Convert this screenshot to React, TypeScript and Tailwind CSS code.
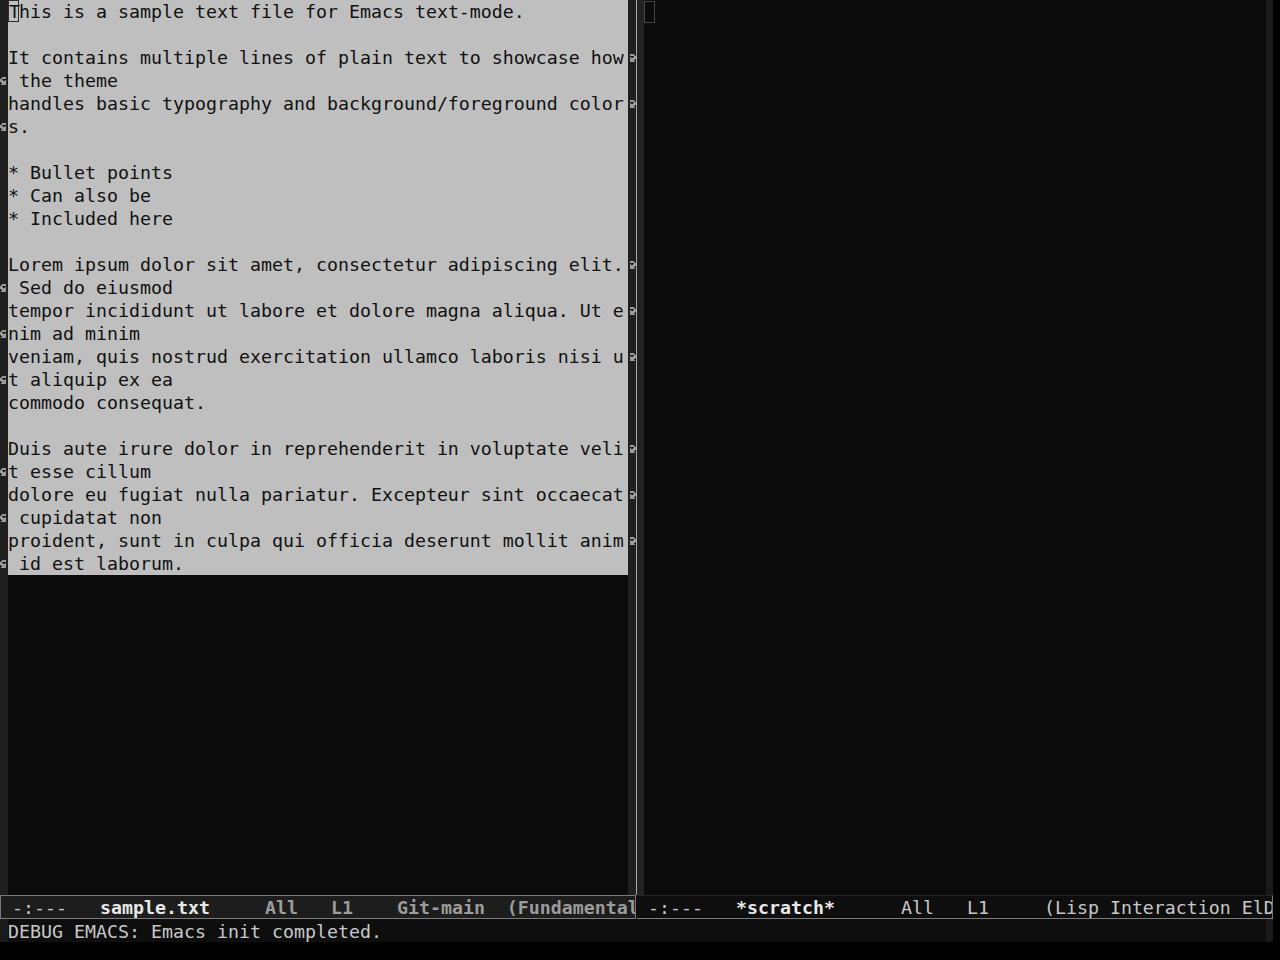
import type { ReactNode } from 'react'

const LEFT_ARROW = [0x3c, 0x7c, 0xc0, 0xe4, 0xfc, 0x7c, 0x3c, 0x7c]
const RIGHT_ARROW = [0x3c, 0x3e, 0x03, 0x27, 0x3f, 0x3e, 0x3c, 0x3e]

type Line = { text: string; r?: boolean; l?: boolean }

const lines: Line[] = [
  { text: 'This is a sample text file for Emacs text-mode.' },
  { text: '' },
  { text: 'It contains multiple lines of plain text to showcase how', r: true },
  { text: ' the theme', l: true },
  { text: 'handles basic typography and background/foreground color', r: true },
  { text: 's.', l: true },
  { text: '' },
  { text: '* Bullet points' },
  { text: '* Can also be' },
  { text: '* Included here' },
  { text: '' },
  { text: 'Lorem ipsum dolor sit amet, consectetur adipiscing elit.', r: true },
  { text: ' Sed do eiusmod', l: true },
  { text: 'tempor incididunt ut labore et dolore magna aliqua. Ut e', r: true },
  { text: 'nim ad minim', l: true },
  { text: 'veniam, quis nostrud exercitation ullamco laboris nisi u', r: true },
  { text: 't aliquip ex ea', l: true },
  { text: 'commodo consequat.' },
  { text: '' },
  { text: 'Duis aute irure dolor in reprehenderit in voluptate veli', r: true },
  { text: 't esse cillum', l: true },
  { text: 'dolore eu fugiat nulla pariatur. Excepteur sint occaecat', r: true },
  { text: ' cupidatat non', l: true },
  { text: 'proident, sunt in culpa qui officia deserunt mollit anim', r: true },
  { text: ' id est laborum.', l: true },
]

function FringeBitmap({ bits }: { bits: number[] }) {
  const rects: ReactNode[] = []
  bits.forEach((row, y) => {
    for (let x = 0; x < 8; x++) {
      if (row & (0x80 >> x)) rects.push(<rect key={`${x}-${y}`} x={x} y={y} width={1} height={1} />)
    }
  })
  return (
    <svg width="8" height="8" viewBox="0 0 8 8" fill="#9a9a9a" shapeRendering="crispEdges">
      {rects}
    </svg>
  )
}

const mono = { fontFamily: '"DejaVu Sans Mono", "Liberation Mono", monospace' }

function TextLine({ line, first }: { line: Line; first: boolean }) {
  return (
    <div className="flex h-[23px]">
      <div className="flex w-[8px] items-center bg-[#1f1f1f]">
        {line.l && <FringeBitmap bits={LEFT_ARROW} />}
      </div>
      <div className="w-[620px] whitespace-pre bg-[#bfbfbf] text-[#111111]">
        {first ? (
          <>
            <span className="inline-block h-[22px] w-[11px] border border-[#2e2e2e] align-top leading-[21px]">
              {line.text[0]}
            </span>
            {line.text.slice(1)}
          </>
        ) : (
          line.text
        )}
      </div>
      <div className="flex w-[8px] items-center bg-[#1f1f1f]">
        {line.r && <FringeBitmap bits={RIGHT_ARROW} />}
      </div>
    </div>
  )
}

function LeftWindow() {
  return (
    <div className="flex w-[636px] flex-col">
      {lines.map((line, i) => (
        <TextLine key={i} line={line} first={i === 0} />
      ))}
      <div className="flex flex-1">
        <div className="w-[8px] bg-[#1f1f1f]" />
        <div className="w-[620px] bg-[#0b0b0b]" />
        <div className="w-[8px] bg-[#1f1f1f]" />
      </div>
    </div>
  )
}

function RightWindow() {
  return (
    <div className="flex w-[636px]">
      <div className="w-[7px] bg-[#222222]" />
      <div className="w-[622px] bg-[#0b0b0b] pt-px">
        <div className="h-[22px] w-[11px] border border-[#444444]" />
      </div>
      <div className="w-[7px] bg-[#1a1a1a]" />
    </div>
  )
}

export default function App() {
  return (
    <div className="h-screen w-full overflow-hidden bg-black text-[18.27px] leading-[23px]" style={mono}>
      <div className="flex h-[942px] w-[1273px] flex-col bg-[#0b0b0b]">
        <div className="flex h-[895px]">
          <LeftWindow />
          <div className="w-px bg-[#a8a8a8]" />
          <RightWindow />
        </div>

        <div className="flex h-[24px]">
          <div className="flex h-[24px] w-[636px] items-center overflow-hidden whitespace-pre border border-[#7a7a7a] bg-[#1d1d1d]">
            <span className="text-[#c8c8c8]"> -:---   </span>
            <span className="-my-px flex h-[24px] items-center border-y border-[#d0d0d0] font-bold text-[#e8e8e8]">
              {'sample.txt  '}
            </span>
            <span className="font-bold text-[#9c9c9c]">{'   All   L1    Git-main  (Fundamental'}</span>
          </div>
          <div className="w-px bg-[#0e0e0e]" />
          <div className="flex h-[24px] w-[636px] items-center overflow-hidden whitespace-pre border-t border-b border-r border-t-[#262626] border-b-[#7a7a7a] border-r-[#7a7a7a] bg-[#0e0e0e] text-[#c8c8c8]">
            <span> -:---   </span>
            <span className="font-bold text-[#e8e8e8]">{'*scratch*   '}</span>
            <span>{'   All   L1     (Lisp Interaction ElD'}</span>
          </div>
        </div>

        <div className="flex h-[23px] bg-[#0e0e0e]">
          <div className="w-[8px] bg-[#1a1a1a]" />
          <div className="flex-1 whitespace-pre pt-px text-[#c8c8c8]">DEBUG EMACS: Emacs init completed.</div>
          <div className="w-[7px] bg-[#1a1a1a]" />
        </div>
      </div>
    </div>
  )
}
